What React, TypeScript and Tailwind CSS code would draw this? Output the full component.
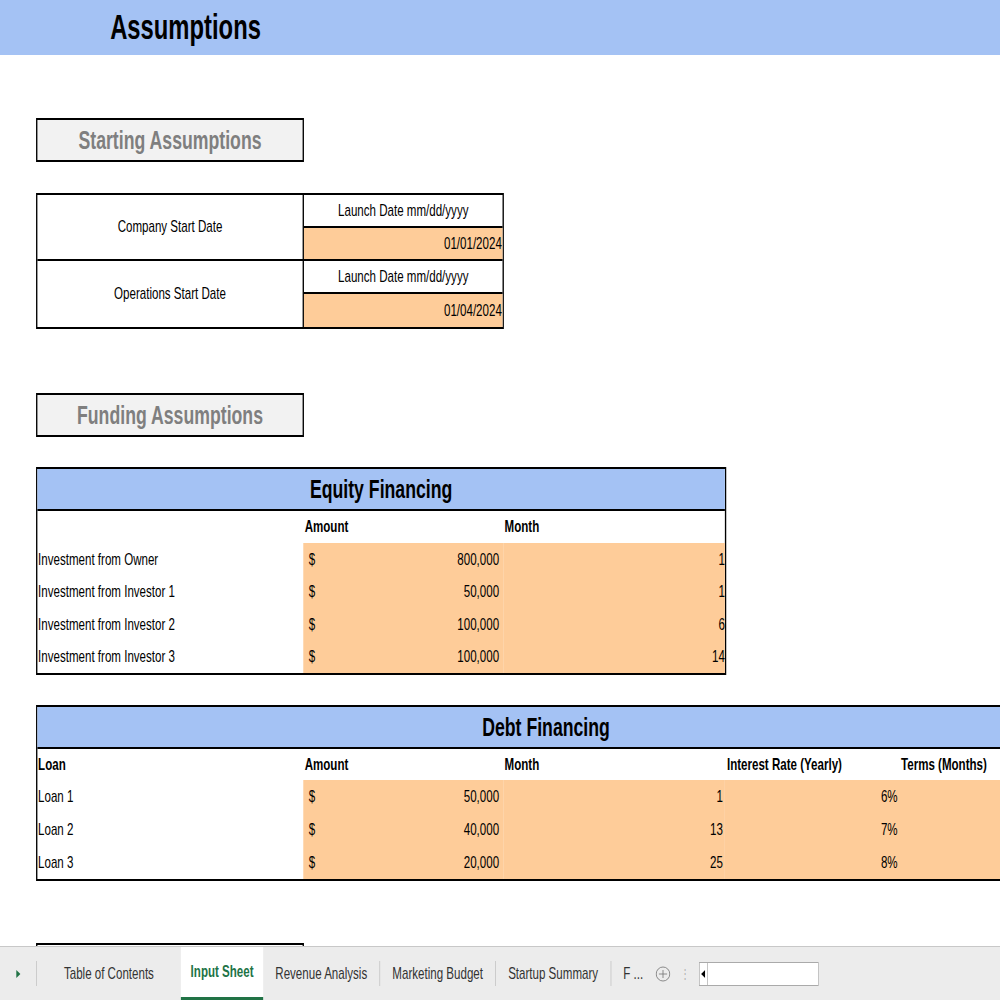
import React from "react";

const F = { fontFamily: "'Liberation Sans',Arial,sans-serif" };

function SectionBox({ title }: { title: string }) {
  return (
    <div className="w-[394px] h-[44px] border-2 border-black bg-[#f2f2f2] flex items-center justify-center">
      <span className="text-[26px] font-bold text-[#7f7f7f]">{title}</span>
    </div>
  );
}

function DateRow({ label, value }: { label: string; value: string }) {
  return (
    <div className="flex h-[66px] border-b-2 border-black last:border-b-0">
      <div className="w-[392px] border-r-2 border-black flex items-center justify-center text-[17px]">{label}</div>
      <div className="flex-1 flex flex-col">
        <div className="h-[33px] border-b-2 border-black flex items-center justify-center text-[17px]">Launch Date mm/dd/yyyy</div>
        <div className="flex-1 bg-[#fecc99] flex items-center justify-end pr-[1px] text-[17px]">{value}</div>
      </div>
    </div>
  );
}

function Sep() {
  return <div className="w-px bg-[#bdbdbd] my-[14px]" />;
}

export default function App() {
  const equity = [
    ["Investment from Owner", "800,000", "1"],
    ["Investment from Investor 1", "50,000", "1"],
    ["Investment from Investor 2", "100,000", "6"],
    ["Investment from Investor 3", "100,000", "14"],
  ];
  const debt = [
    ["Loan 1", "50,000", "1", "6%"],
    ["Loan 2", "40,000", "13", "7%"],
    ["Loan 3", "20,000", "25", "8%"],
  ];
  return (
    <div className="w-[1000px] h-[1000px] overflow-hidden bg-white">
      <div className="w-[1471px] h-[1000px] origin-top-left scale-x-[0.68] text-black relative whitespace-nowrap" style={F}>
        <div className="h-[55px] bg-[#a4c2f4] flex items-center pl-[162px]">
          <span className="text-[35px] font-bold">Assumptions</span>
        </div>
        <div className="pl-[53px]">
          <div className="mt-[63px]"><SectionBox title="Starting Assumptions" /></div>
          <div className="mt-[31px] w-[688px] border-2 border-black">
            <DateRow label="Company Start Date" value="01/01/2024" />
            <DateRow label="Operations Start Date" value="01/04/2024" />
          </div>
          <div className="mt-[64px]"><SectionBox title="Funding Assumptions" /></div>

          <div className="mt-[30px] w-[1015px] border-2 border-black">
            <div className="h-[42px] bg-[#a4c2f4] border-b-2 border-black flex items-center justify-center text-[26px] font-bold">Equity Financing</div>
            <div className="grid grid-cols-[391px_294px_326px] text-[17px]">
              <div className="h-[32px]" />
              <div className="h-[32px] flex items-end pb-[4px] pl-[2px] font-bold">Amount</div>
              <div className="h-[32px] flex items-end pb-[4px] pl-[2px] font-bold">Month</div>
              {equity.map(([l, a, m]) => (
                <React.Fragment key={l}>
                  <div className="h-[32.5px] flex items-center pl-[1px]">{l}</div>
                  <div className="h-[32.5px] bg-[#fecc99] flex items-center justify-between pl-[8px] pr-[6px]"><span>$</span><span>{a}</span></div>
                  <div className="h-[32.5px] bg-[#fecc99] flex items-center justify-end">{m}</div>
                </React.Fragment>
              ))}
            </div>
          </div>

          <div className="mt-[30px] w-[1500px] border-2 border-black">
            <div className="h-[42px] bg-[#a4c2f4] border-b-2 border-black flex items-center text-[26px] font-bold">
              <span className="w-[1660px] text-center">Debt Financing</span>
            </div>
            <div className="grid grid-cols-[391px_294px_326px_259px_230px] text-[17px]">
              <div className="h-[31px] flex items-center pl-[1px] font-bold">Loan</div>
              <div className="h-[31px] flex items-center pl-[2px] font-bold">Amount</div>
              <div className="h-[31px] flex items-center pl-[2px] font-bold">Month</div>
              <div className="h-[31px] flex items-center pl-[3px] font-bold">Interest Rate (Yearly)</div>
              <div className="h-[31px] flex items-center font-bold">Terms (Months)</div>
              {debt.map(([l, a, m, r]) => (
                <React.Fragment key={l}>
                  <div className="h-[33px] flex items-center pl-[1px]">{l}</div>
                  <div className="h-[33px] bg-[#fecc99] flex items-center justify-between pl-[8px] pr-[6px]"><span>$</span><span>{a}</span></div>
                  <div className="h-[33px] bg-[#fecc99] flex items-center justify-end pr-[3px]">{m}</div>
                  <div className="h-[33px] bg-[#fecc99] flex items-center justify-end pr-[5px]">{r}</div>
                  <div className="h-[33px] bg-[#fecc99]" />
                </React.Fragment>
              ))}
            </div>
          </div>
          <div className="mt-[62px] w-[394px] h-[20px] border-2 border-black" />
        </div>

        <div className="absolute left-0 right-0 top-[946px] h-[54px] bg-[#ececec] border-t border-[#c8c8c8] flex items-stretch text-[17px] text-[#333]">
          <div className="w-[53px] flex items-center justify-center">
            <svg width="8" height="10" viewBox="0 0 8 10"><path d="M1 1 L7 5 L1 9 Z" fill="#217346" /></svg>
          </div>
          <Sep />
          <div className="px-[40px] flex items-center">Table of Contents</div>
          <div className="px-[14px] bg-white flex items-center border-b-[3px] border-[#217346] text-[#217346] font-bold">Input Sheet</div>
          <div className="px-[18px] flex items-center">Revenue Analysis</div>
          <Sep />
          <div className="px-[18px] flex items-center">Marketing Budget</div>
          <Sep />
          <div className="px-[18px] flex items-center">Startup Summary</div>
          <Sep />
          <div className="px-[18px] flex items-center">F ...</div>
          <div className="flex items-center">
            <svg width="22" height="16" viewBox="0 0 22 16"><ellipse cx="11" cy="8" rx="10" ry="7" fill="none" stroke="#777" /><path d="M11 4v8M5 8h12" stroke="#777" /></svg>
          </div>
          <div className="flex items-center ml-[15px] text-[#aaa] text-[12px]">⋮</div>
          <div className="flex items-center ml-[15px]">
            <div className="w-[176px] h-[24px] bg-white border border-[#aaa] flex items-center">
              <div className="w-[12px] h-full border-r border-[#aaa] flex items-center justify-center">
                <svg width="6" height="8" viewBox="0 0 6 8"><path d="M6 0 L0 4 L6 8 Z" fill="#000" /></svg>
              </div>
            </div>
          </div>
        </div>
      </div>
    </div>
  );
}
